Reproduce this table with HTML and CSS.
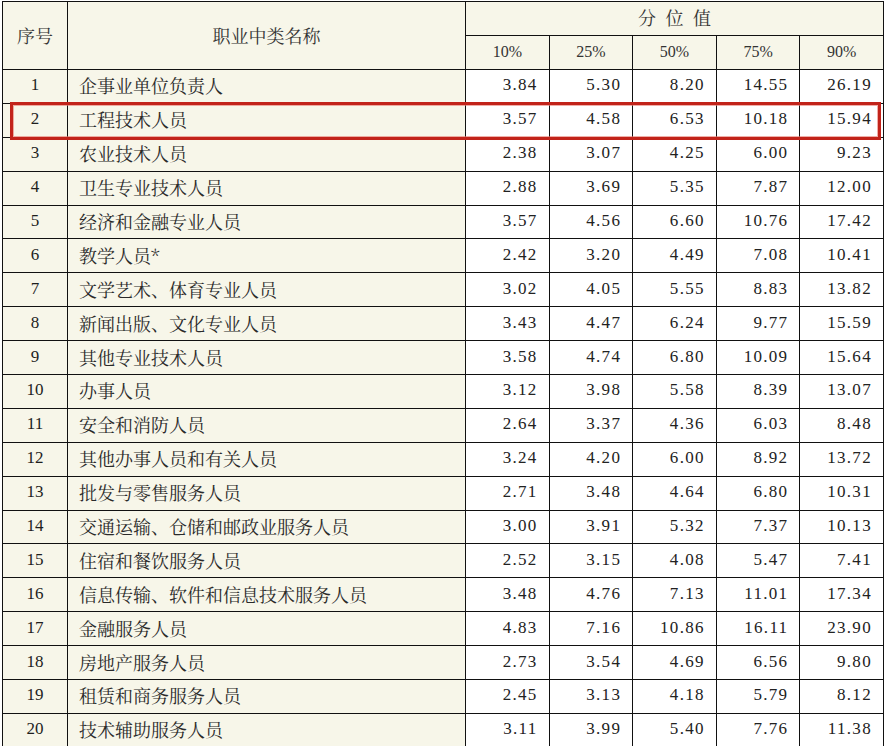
FILE: index.html
```html
<!DOCTYPE html>
<html lang="zh-CN">
<head>
<meta charset="utf-8">
<title>职业中类分位值</title>
<link rel="stylesheet" href="styles.css">
</head>
<body>
<div class="wrap">
<table class="tbl">
<colgroup>
<col class="c-no"><col class="c-name"><col class="c-num"><col class="c-num"><col class="c-num"><col class="c-num"><col class="c-num">
</colgroup>
<thead>
<tr class="h1"><th rowspan="2" class="cjk">序号</th><th rowspan="2" class="cjk">职业中类名称</th><th colspan="5" class="cjk group">分 位 值</th></tr>
<tr class="h2"><th class="pct">10%</th><th class="pct">25%</th><th class="pct">50%</th><th class="pct">75%</th><th class="pct">90%</th></tr>
</thead>
<tbody>
<tr><td class="no">1</td><td class="name">企事业单位负责人</td><td class="num">3.84</td><td class="num">5.30</td><td class="num">8.20</td><td class="num">14.55</td><td class="num">26.19</td></tr>
<tr><td class="no">2</td><td class="name">工程技术人员</td><td class="num">3.57</td><td class="num">4.58</td><td class="num">6.53</td><td class="num">10.18</td><td class="num">15.94</td></tr>
<tr><td class="no">3</td><td class="name">农业技术人员</td><td class="num">2.38</td><td class="num">3.07</td><td class="num">4.25</td><td class="num">6.00</td><td class="num">9.23</td></tr>
<tr><td class="no">4</td><td class="name">卫生专业技术人员</td><td class="num">2.88</td><td class="num">3.69</td><td class="num">5.35</td><td class="num">7.87</td><td class="num">12.00</td></tr>
<tr><td class="no">5</td><td class="name">经济和金融专业人员</td><td class="num">3.57</td><td class="num">4.56</td><td class="num">6.60</td><td class="num">10.76</td><td class="num">17.42</td></tr>
<tr><td class="no">6</td><td class="name">教学人员*</td><td class="num">2.42</td><td class="num">3.20</td><td class="num">4.49</td><td class="num">7.08</td><td class="num">10.41</td></tr>
<tr><td class="no">7</td><td class="name">文学艺术、体育专业人员</td><td class="num">3.02</td><td class="num">4.05</td><td class="num">5.55</td><td class="num">8.83</td><td class="num">13.82</td></tr>
<tr><td class="no">8</td><td class="name">新闻出版、文化专业人员</td><td class="num">3.43</td><td class="num">4.47</td><td class="num">6.24</td><td class="num">9.77</td><td class="num">15.59</td></tr>
<tr><td class="no">9</td><td class="name">其他专业技术人员</td><td class="num">3.58</td><td class="num">4.74</td><td class="num">6.80</td><td class="num">10.09</td><td class="num">15.64</td></tr>
<tr><td class="no">10</td><td class="name">办事人员</td><td class="num">3.12</td><td class="num">3.98</td><td class="num">5.58</td><td class="num">8.39</td><td class="num">13.07</td></tr>
<tr><td class="no">11</td><td class="name">安全和消防人员</td><td class="num">2.64</td><td class="num">3.37</td><td class="num">4.36</td><td class="num">6.03</td><td class="num">8.48</td></tr>
<tr><td class="no">12</td><td class="name">其他办事人员和有关人员</td><td class="num">3.24</td><td class="num">4.20</td><td class="num">6.00</td><td class="num">8.92</td><td class="num">13.72</td></tr>
<tr><td class="no">13</td><td class="name">批发与零售服务人员</td><td class="num">2.71</td><td class="num">3.48</td><td class="num">4.64</td><td class="num">6.80</td><td class="num">10.31</td></tr>
<tr><td class="no">14</td><td class="name">交通运输、仓储和邮政业服务人员</td><td class="num">3.00</td><td class="num">3.91</td><td class="num">5.32</td><td class="num">7.37</td><td class="num">10.13</td></tr>
<tr><td class="no">15</td><td class="name">住宿和餐饮服务人员</td><td class="num">2.52</td><td class="num">3.15</td><td class="num">4.08</td><td class="num">5.47</td><td class="num">7.41</td></tr>
<tr><td class="no">16</td><td class="name">信息传输、软件和信息技术服务人员</td><td class="num">3.48</td><td class="num">4.76</td><td class="num">7.13</td><td class="num">11.01</td><td class="num">17.34</td></tr>
<tr><td class="no">17</td><td class="name">金融服务人员</td><td class="num">4.83</td><td class="num">7.16</td><td class="num">10.86</td><td class="num">16.11</td><td class="num">23.90</td></tr>
<tr><td class="no">18</td><td class="name">房地产服务人员</td><td class="num">2.73</td><td class="num">3.54</td><td class="num">4.69</td><td class="num">6.56</td><td class="num">9.80</td></tr>
<tr><td class="no">19</td><td class="name">租赁和商务服务人员</td><td class="num">2.45</td><td class="num">3.13</td><td class="num">4.18</td><td class="num">5.79</td><td class="num">8.12</td></tr>
<tr><td class="no">20</td><td class="name">技术辅助服务人员</td><td class="num">3.11</td><td class="num">3.99</td><td class="num">5.40</td><td class="num">7.76</td><td class="num">11.38</td></tr>
</tbody>
</table>
<div class="highlight"></div>
</div>
</body>
</html>
```

FILE: styles.css
```css
html, body {
  margin: 0;
  padding: 0;
  background: #ffffff;
}

.wrap {
  position: relative;
  width: 884px;
  height: 746px;
  overflow: hidden;
  background: #ffffff;
}

.tbl {
  border-collapse: collapse;
  table-layout: fixed;
  width: 881px;
  margin: 1px 0 0 2px;
  color: #1e1e1e;
  font-family: "Liberation Serif", "Noto Serif CJK SC", "Noto Sans CJK SC", serif;
}

.c-no { width: 65px; }
.c-name { width: 398px; }
.c-num { width: 83.6px; }

.tbl th,
.tbl td {
  border: 1px solid #111;
  padding: 0 0 2px 0;
  white-space: nowrap;
}

.tbl th {
  background: #f7f6e9;
  font-weight: normal;
  color: #333;
  text-align: center;
}

.h1 { height: 34px; }
.h2 { height: 34px; }

.cjk {
  font-family: "Noto Serif CJK SC", "Noto Sans CJK SC", serif;
  font-size: 18px;
}

.group {
  word-spacing: 5px;
  padding-bottom: 4px !important;
}

.pct {
  font-size: 16px;
}

.tbl tbody tr {
  height: 33.9px;
}

.no {
  background: #f7f6e9;
  text-align: center;
  font-size: 17px;
}

.name {
  background: #f7f6e9;
  text-align: left;
  padding-left: 11px !important;
  font-family: "Noto Serif CJK SC", "Noto Sans CJK SC", serif;
  font-size: 18px;
  color: #2a2a2a;
}

.num {
  background: #ffffff;
  text-align: right;
  padding-right: 11px !important;
  font-size: 17px;
  letter-spacing: 1.3px;
  color: #222;
}

.highlight {
  position: absolute;
  left: 10px;
  top: 102px;
  width: 871px;
  height: 38px;
  box-sizing: border-box;
  border: 3px solid #c2231a;
  box-shadow: inset 0 0 0 1px rgba(230, 120, 110, 0.6);
  pointer-events: none;
}
```
